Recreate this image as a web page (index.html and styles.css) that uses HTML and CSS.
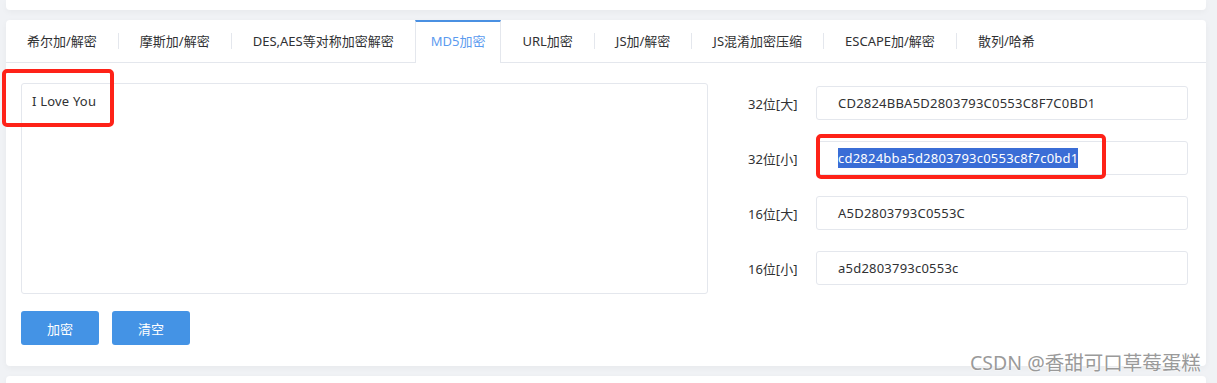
FILE: index.html
```html
<!DOCTYPE html>
<html lang="zh-CN">
<head>
<meta charset="utf-8">
<title>MD5加密</title>
<link rel="stylesheet" href="styles.css">
</head>
<body>
<div class="page">
  <div class="card card-top"></div>
  <div class="card card-main">
    <div class="tabs">
      <div class="tab">希尔加/解密</div>
      <span class="sep"></span>
      <div class="tab">摩斯加/解密</div>
      <span class="sep"></span>
      <div class="tab">DES,AES等对称加密解密</div>
      <div class="tab active">MD5加密</div>
      <div class="tab">URL加密</div>
      <span class="sep"></span>
      <div class="tab">JS加/解密</div>
      <span class="sep"></span>
      <div class="tab">JS混淆加密压缩</div>
      <span class="sep"></span>
      <div class="tab">ESCAPE加/解密</div>
      <span class="sep"></span>
      <div class="tab">散列/哈希</div>
    </div>
    <div class="content">
      <div class="left">
        <div class="textarea">I Love You</div>
        <div class="buttons">
          <button class="btn">加密</button>
          <button class="btn">清空</button>
        </div>
      </div>
      <div class="right">
        <div class="row"><label class="lbl">32位[大]</label><div class="input">CD2824BBA5D2803793C0553C8F7C0BD1</div></div>
        <div class="row"><label class="lbl">32位[小]</label><div class="input"><span class="sel">cd2824bba5d2803793c0553c8f7c0bd1</span></div></div>
        <div class="row"><label class="lbl">16位[大]</label><div class="input">A5D2803793C0553C</div></div>
        <div class="row"><label class="lbl">16位[小]</label><div class="input">a5d2803793c0553c</div></div>
      </div>
    </div>
    <div class="mark mark-text"></div>
    <div class="mark mark-result"></div>
  </div>
  <div class="card card-bottom"></div>
  <div class="watermark">CSDN @香甜可口草莓蛋糕</div>
</div>
</body>
</html>
```

FILE: styles.css
```css
* { box-sizing: border-box; }
html, body {
  margin: 0;
  padding: 0;
  background: #f0f2f5;
  font-family: "Noto Sans", "Noto Sans CJK SC", sans-serif;
  font-size: 13px;
  color: #303133;
  overflow: hidden;
}
.page {
  position: relative;
  display: flex;
  flex-direction: column;
  gap: 10px;
  padding: 0 11px 0 6px;
  height: 383px;
}
.card {
  flex-shrink: 0;
  background: #fff;
  border-radius: 4px;
  box-shadow: 0 2px 6px rgba(0, 0, 0, 0.04);
}
.card-top {
  height: 10px;
  border-radius: 0 0 4px 4px;
}
.card-main {
  position: relative;
  height: 346px;
}
.card-bottom {
  height: 20px;
}
.tabs {
  display: flex;
  align-items: center;
  height: 43px;
  border-bottom: 1px solid #e4e7ed;
}
.tab {
  height: 42px;
  line-height: 42px;
  padding: 0 21px;
  white-space: nowrap;
  color: #303133;
}
.sep {
  width: 1px;
  height: 16px;
  background: #e4e7ed;
}
.tab.active {
  height: 43px;
  margin-bottom: -1px;
  background: #fff;
  border-top: 2px solid #4a90e2;
  border-left: 1px solid #e4e7ed;
  border-right: 1px solid #e4e7ed;
  line-height: 38px;
  padding: 0 15px 0 15px;
  color: #5b9bef;
}
.content {
  display: flex;
  padding: 20px 18px 0 15px;
}
.left {
  display: flex;
  flex-direction: column;
  gap: 17px;
  width: 687px;
}
.textarea {
  height: 211px;
  border: 1px solid #e4e7ed;
  border-radius: 3px;
  padding: 9px 10px;
  line-height: 17px;
  letter-spacing: 0.2px;
}
.buttons {
  display: flex;
  gap: 13px;
}
.btn {
  width: 78px;
  height: 34px;
  border: none;
  border-radius: 3px;
  background: #4493e5;
  color: #fff;
  font-family: inherit;
  font-size: 13px;
  padding: 0;
}
.right {
  flex: 1;
  display: flex;
  flex-direction: column;
  gap: 21px;
  padding-top: 3px;
}
.row {
  display: flex;
  align-items: center;
}
.lbl {
  width: 108px;
  padding-left: 40px;
  white-space: nowrap;
}
.input {
  flex: 1;
  height: 34px;
  line-height: 32px;
  border: 1px solid #e4e7ed;
  border-radius: 3px;
  padding-left: 21px;
  white-space: nowrap;
  letter-spacing: 0.22px;
}
.sel {
  background: #3a6dd6;
  color: #fff;
  padding: 1px 0;
}
.mark {
  position: absolute;
  border: 4px solid #fe2218;
  border-radius: 5px;
}
.mark-text {
  left: -4px;
  top: 49px;
  width: 112px;
  height: 58px;
}
.mark-result {
  left: 810px;
  top: 114px;
  width: 290px;
  height: 45px;
}
.watermark {
  position: absolute;
  left: 970px;
  top: 352px;
  font-size: 19.5px;
  line-height: 22px;
  color: #9a9a9a;
  text-shadow: 0 0 2px #fff, 0 0 2px #fff;
  white-space: nowrap;
}
```
